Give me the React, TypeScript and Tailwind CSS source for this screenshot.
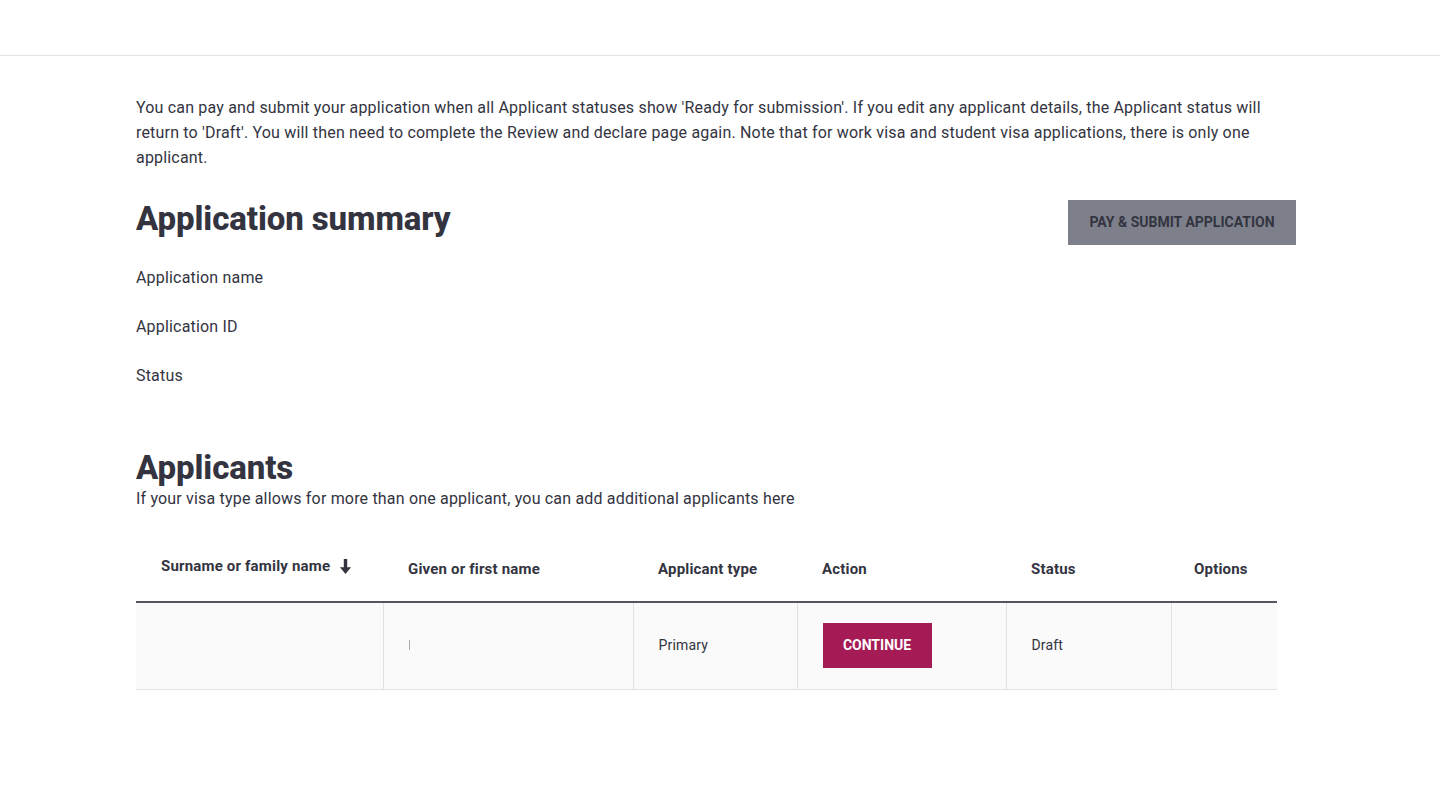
import React from "react";

export default function App() {
  const font = { fontFamily: "Roboto, 'Liberation Sans', sans-serif" };
  return (
    <div className="min-h-[809px] bg-white text-[#33343f] tracking-[0.18px]" style={font}>
      <header className="h-[56px] border-b border-[#e3e3e3] bg-white" />
      <main className="px-[136px]">
        <p className="mt-[39px] text-[16px] leading-[25px] text-[#33343f] max-w-[1140px]">
          You can pay and submit your application when all Applicant statuses show 'Ready for submission'. If you edit any
          applicant details, the Applicant status will return to 'Draft'. You will then need to complete the Review and
          declare page again. Note that for work visa and student visa applications, there is only one applicant.
        </p>

        <div className="mt-[29px] flex items-start justify-between pr-[8px]">
          <h1 className="text-[33px] leading-[40px] font-extrabold text-[#33343f] tracking-[-0.1px]">Application summary</h1>
          <button className="mt-[1px] h-[45px] w-[228px] bg-[#7d808b] text-[14px] font-bold text-[#33343f] tracking-normal">
            PAY &amp; SUBMIT APPLICATION
          </button>
        </div>

        <dl className="mt-[21px] flex flex-col gap-[25px] text-[16px] leading-[24px]">
          <dt>Application name</dt>
          <dt>Application ID</dt>
          <dt>Status</dt>
        </dl>

        <h2 className="mt-[60px] text-[33px] leading-[40px] font-extrabold text-[#33343f] tracking-[-0.1px]">Applicants</h2>
        <p className="mt-[-1px] text-[16px] leading-[24px]">
          If your visa type allows for more than one applicant, you can add additional applicants here
        </p>

        <table className="mt-[27px] w-[1141px] border-collapse text-[14px]">
          <thead>
            <tr className="h-[64px] border-b-2 border-[#55565f] text-left text-[15px]">
              <th className="w-[247px] pl-[25px] font-bold">
                <span className="relative top-[-3px] inline-flex items-center gap-[9px]">
                  Surname or family name
                  <svg width="13" height="15" viewBox="0 0 12 14" fill="#33343f">
                    <path d="M4.4 0h3.2v7.8h3.6L6 14 0.8 7.8h3.6z" />
                  </svg>
                </span>
              </th>
              <th className="w-[250px] pl-[25px] font-bold">Given or first name</th>
              <th className="w-[164px] pl-[25px] font-bold">Applicant type</th>
              <th className="w-[209px] pl-[25px] font-bold">Action</th>
              <th className="w-[165px] pl-[25px] font-bold">Status</th>
              <th className="pl-[23px] font-bold">Options</th>
            </tr>
          </thead>
          <tbody>
            <tr className="h-[87px] border-b border-[#e2e2e2] bg-[#fafafa]">
              <td className="border-r border-[#e2e2e2]" />
              <td className="border-r border-[#e2e2e2] pl-[25px]">
                <span className="inline-block h-[10px] w-px bg-[#aaa]" />
              </td>
              <td className="border-r border-[#e2e2e2] pl-[25px]">Primary</td>
              <td className="border-r border-[#e2e2e2] pl-[25px]">
                <button className="h-[45px] w-[109px] bg-[#a51b56] text-[14px] font-bold text-white tracking-normal">CONTINUE</button>
              </td>
              <td className="border-r border-[#e2e2e2] pl-[25px]">Draft</td>
              <td />
            </tr>
          </tbody>
        </table>
      </main>
    </div>
  );
}
